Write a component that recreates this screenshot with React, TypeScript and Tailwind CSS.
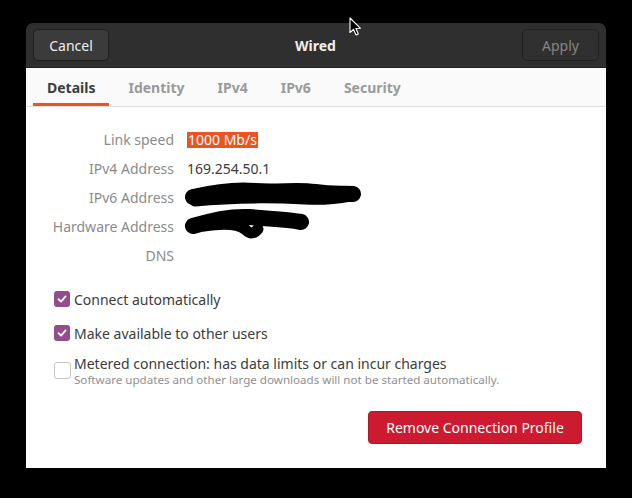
import React from "react";

function Check({ checked }: { checked: boolean }) {
  if (checked) {
    return (
      <div className="w-[16px] h-[16px] rounded-[3px] bg-[#924d8b] flex items-center justify-center shrink-0">
        <svg width="12" height="12" viewBox="0 0 12 12">
          <path d="M2.5 6.2 L5 8.6 L9.6 3.4" fill="none" stroke="#ffffff" strokeWidth="1.8" strokeLinecap="round" strokeLinejoin="round" />
        </svg>
      </div>
    );
  }
  return <div className="w-[17px] h-[17px] rounded-[3px] bg-white border border-[#c6c4c1] shrink-0" />;
}

const rows: { label: string; value: React.ReactNode }[] = [
  {
    label: "Link speed",
    value: <span className="bg-[#e95420] text-white px-[1px] leading-[16px] inline-block">1000 Mb/s</span>,
  },
  { label: "IPv4 Address", value: <span className="text-[#3c3c3c]">169.254.50.1</span> },
  {
    label: "IPv6 Address",
    value: (
      <svg width="180" height="29" viewBox="0 0 180 29" className="block -ml-[2px] overflow-visible">
        <path d="M8 14 C30 9 50 6 70 8 C95 10 110 6 130 9 C150 12 160 10 168 11" fill="none" stroke="#000" strokeWidth="16" strokeLinecap="round" strokeLinejoin="round" />
        <path d="M10 18 C40 15 80 14 120 16 C140 17 155 15 165 13" fill="none" stroke="#000" strokeWidth="11" strokeLinecap="round" />
      </svg>
    ),
  },
  {
    label: "Hardware Address",
    value: (
      <svg width="130" height="29" viewBox="0 0 130 29" className="block -ml-[3px] overflow-visible">
        <path d="M9 14 C25 9 45 4 65 5 C85 7 100 7 117 10" fill="none" stroke="#000" strokeWidth="16" strokeLinecap="round" strokeLinejoin="round" />
        <path d="M20 14 C40 11 55 12 62 18 C66 22 70 22 74 17" fill="none" stroke="#000" strokeWidth="11" strokeLinecap="round" strokeLinejoin="round" />
      </svg>
    ),
  },
  { label: "DNS", value: null },
];

const tabs = ["Details", "Identity", "IPv4", "IPv6", "Security"];

export default function App() {
  return (
    <div
      className="w-[632px] h-[498px] bg-black overflow-hidden relative"
      style={{ fontFamily: '"Noto Sans", "Open Sans", sans-serif' }}
    >
      <div className="ml-[26px] mt-[23px] w-[580px] h-[445px] flex flex-col rounded-t-[7px] overflow-hidden">
        {/* Header */}
        <div className="h-[45px] bg-[#2f2f2f] flex items-center justify-between px-[7px] border-b border-[#232323]">
          <div className="w-[76px] h-[32px] rounded-[5px] bg-[#3b3b3b] border border-[#1f1f1f] flex items-center justify-center text-[14px] text-[#eeeeec]">
            Cancel
          </div>
          <div className="text-[14px] font-bold text-[#eeeeec]">Wired</div>
          <div className="w-[77px] h-[32px] rounded-[5px] bg-[#303030] border border-[#222222] flex items-center justify-center text-[14px] text-[#858585]">
            Apply
          </div>
        </div>
        {/* Tabs */}
        <div className="h-[39px] bg-[#fafafa] border-b border-[#dcdcdc] flex items-stretch pl-[7px] gap-[5px]">
          {tabs.map((t, i) => (
            <div key={t} className="relative px-[14px] flex items-center text-[14px] font-bold">
              <span className={i === 0 ? "text-[#3d3d3d]" : "text-[#9a9a9a]"}>{t}</span>
              {i === 0 && <div className="absolute left-0 right-0 bottom-[0px] h-[3px] bg-[#e95420]" />}
            </div>
          ))}
        </div>
        {/* Content */}
        <div className="flex-1 bg-white flex flex-col pt-[18px]">
          <div className="flex flex-col">
            {rows.map((r) => (
              <div key={r.label} className="h-[29px] flex items-center text-[14px]">
                <div className="w-[148px] text-right text-[#8b8b8b]">{r.label}</div>
                <div className="ml-[13px] flex items-center">{r.value}</div>
              </div>
            ))}
          </div>
          <div className="flex flex-col pl-[28px] mt-[12px] text-[14px] text-[#3c3c3c]">
            <div className="h-[34px] flex items-center gap-[4px]">
              <Check checked />
              <span>Connect automatically</span>
            </div>
            <div className="h-[34px] flex items-center gap-[4px]">
              <Check checked />
              <span>Make available to other users</span>
            </div>
            <div className="flex items-center gap-[3px] mt-[5px]">
              <Check checked={false} />
              <div className="flex flex-col">
                <span className="leading-[18px]">Metered connection: has data limits or can incur charges</span>
                <span className="text-[11.6px] leading-[13px] text-[#8f8f8f]">
                  Software updates and other large downloads will not be started automatically.
                </span>
              </div>
            </div>
          </div>
          <div className="flex justify-end pr-[24px] mt-[25px]">
            <div className="w-[214px] h-[33px] rounded-[4px] bg-[#cc1a30] border border-[#b5142a] flex items-center justify-center text-[14px] text-white">
              Remove Connection Profile
            </div>
          </div>
        </div>
      </div>
      {/* Mouse cursor */}
      <svg className="absolute left-[349px] top-[17px]" width="14" height="20" viewBox="0 0 14 20">
        <path d="M1 1 L1 15.5 L4.5 12.3 L7 18 L9.3 17 L6.9 11.5 L11.5 11.3 Z" fill="#000" stroke="#fff" strokeWidth="1.1" strokeLinejoin="round" />
      </svg>
    </div>
  );
}
